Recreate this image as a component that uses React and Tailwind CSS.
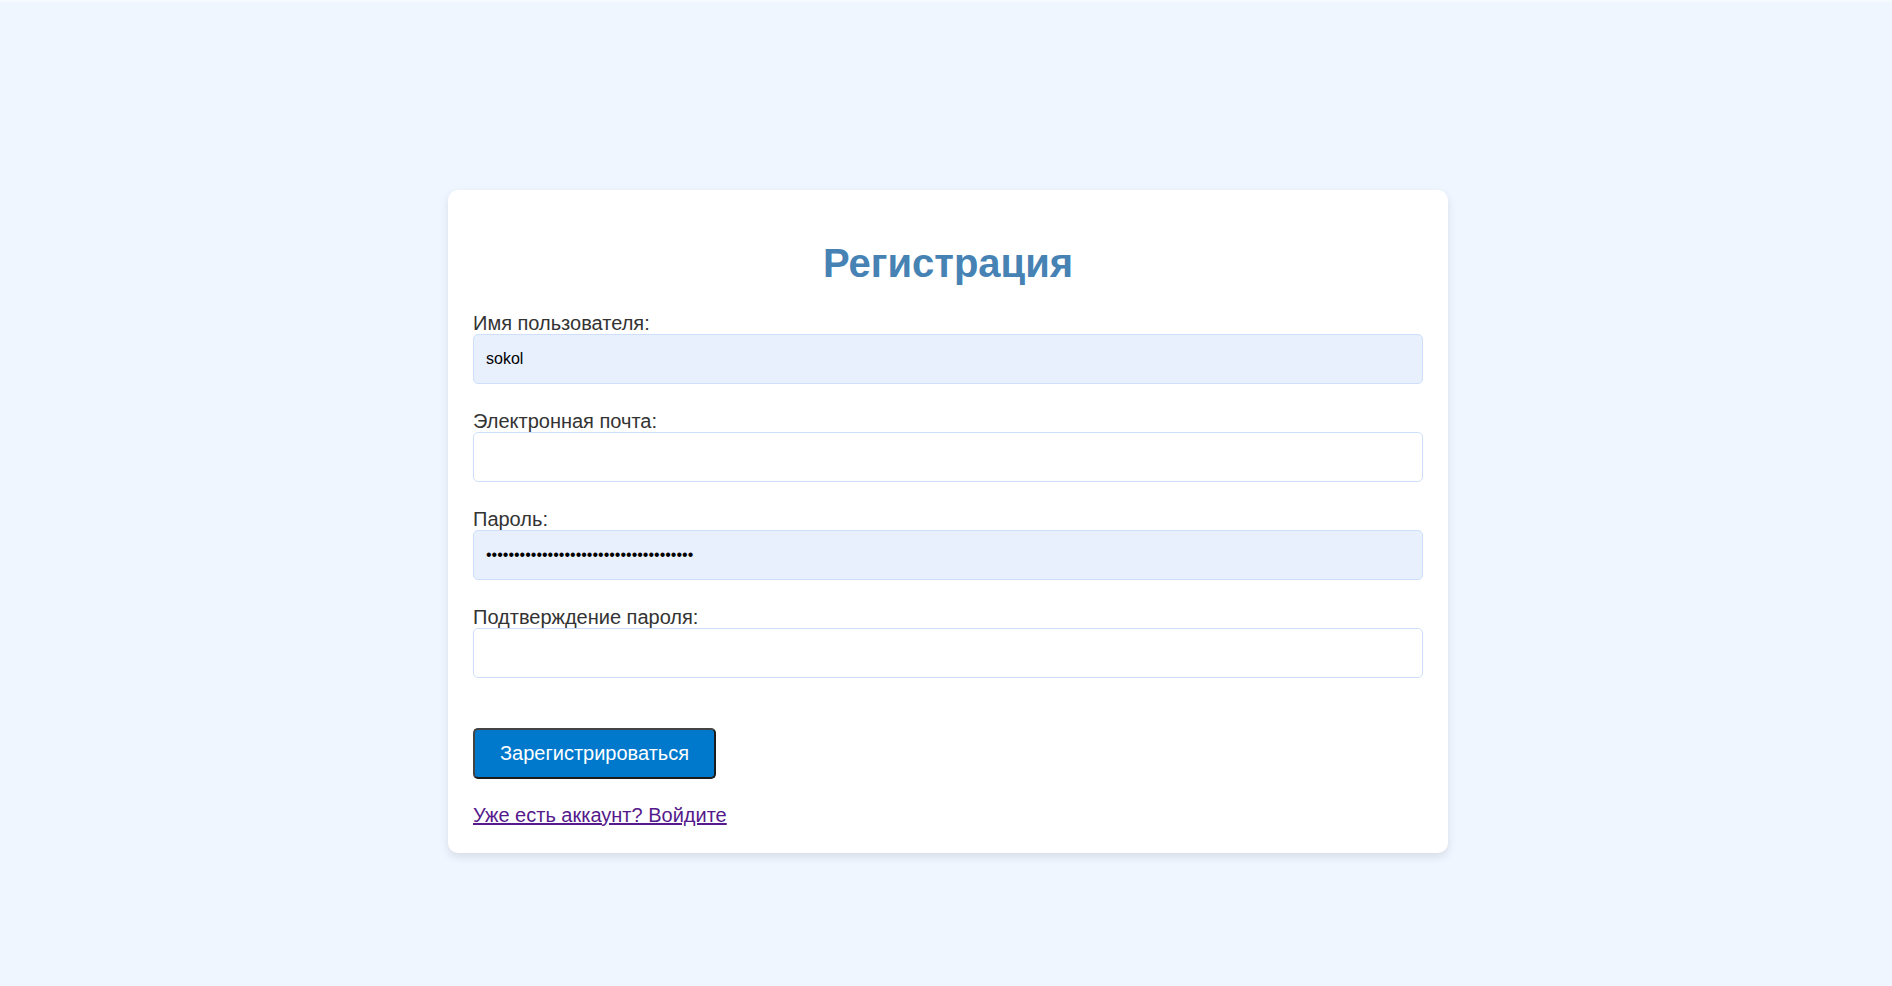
import React from "react";

function Field({ label, value, type = "text", filled = false }) {
  return (
    <div className="mb-[26px] flex flex-col">
      <label className="block text-[20px] leading-[22px] text-[#333333]">{label}</label>
      <input
        type={type}
        defaultValue={value}
        readOnly
        className={`h-[50px] w-full rounded-[5px] border border-[#cddffb] px-[12px] text-[16px] text-black outline-none ${
          filled ? "bg-[#e8f0fe]" : "bg-white"
        }`}
        style={{ fontFamily: '"Liberation Sans", Arial, sans-serif' }}
      />
    </div>
  );
}

export default function App() {
  return (
    <div
      className="min-h-[986px] w-full bg-[#eff6ff]"
      style={{ fontFamily: '"Liberation Sans", Arial, sans-serif' }}
    >
      <div className="h-[2px] w-full bg-[#f6faff]" />
      <div className="flex justify-center pt-[188px] pl-[4px]">
        <div className="w-[1000px] rounded-[10px] bg-white px-[25px] pt-[25px] pb-[27px] shadow-[0_4px_10px_rgba(0,0,0,0.1)]">
          <h2 className="mt-[25px] mb-[26px] text-center text-[40px] font-bold leading-[46px] text-[#4682b4]">
            Регистрация
          </h2>
          <Field label="Имя пользователя:" value="sokol" filled />
          <Field label="Электронная почта:" value="" type="email" />
          <Field label="Пароль:" value="sokolsokolsokolsokolsokolsokolsokol12" type="password" filled />
          <Field label="Подтверждение пароля:" value="" type="password" />
          <div className="flex pt-[24px]">
            <button className="h-[51px] rounded-[5px] border-2 border-[#1c1c1c] border-t-[#444] border-l-[#444] bg-[#0079cc] px-[25px] text-[20px] leading-[23px] text-white">
              Зарегистрироваться
            </button>
          </div>
          <div className="mt-[25px] text-[20px] leading-[22px]">
            <a href="#" className="text-[20px] leading-[22px] text-[#551a8b] underline">
              Уже есть аккаунт? Войдите
            </a>
          </div>
        </div>
      </div>
    </div>
  );
}
